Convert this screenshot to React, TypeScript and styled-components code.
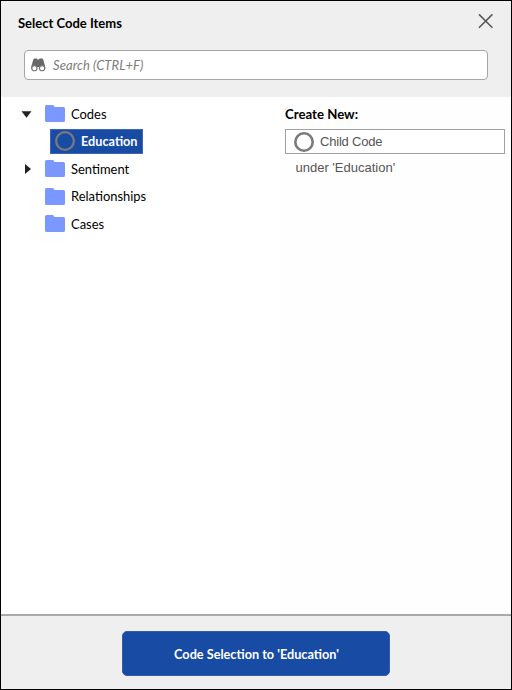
import React from 'react';
import styled, { createGlobalStyle } from 'styled-components';

const GlobalStyle = createGlobalStyle`
  * { box-sizing: border-box; }
  body { margin: 0; background: #fff; }
`;

const Dialog = styled.div`
  width: 512px;
  height: 690px;
  border: 1px solid #000;
  background: #fff;
  display: flex;
  flex-direction: column;
  font-family: Lato, 'Liberation Sans', sans-serif;
  font-size: 13px;
  color: #000;
  white-space: nowrap;
`;

const Header = styled.header`
  height: 96px;
  background: #efefef;
`;

const TitleRow = styled.div`
  height: 49px;
  padding: 11px 16px 0 17px;
  display: flex;
  justify-content: space-between;
  align-items: flex-start;
`;

const Title = styled.h1`
  margin: 0;
  font-size: 13px;
  line-height: 22px;
  font-weight: 700;
`;

const CloseButton = styled.button`
  border: 0;
  padding: 0;
  background: none;
  display: flex;
`;

const SearchBox = styled.label`
  margin: 0 23px;
  height: 30px;
  border: 1px solid #a6a6a6;
  border-radius: 4px;
  background: #fff;
  display: flex;
  align-items: center;
  padding-left: 6px;
  gap: 7px;
`;

const SearchHint = styled.span`
  font-style: italic;
  font-size: 13px;
  letter-spacing: 0.07px;
  color: #7d7d7d;
`;

const Body = styled.main`
  flex: 1;
  display: grid;
  grid-template-columns: 278px 1fr;
`;

const Tree = styled.ul`
  list-style: none;
  margin: 0;
  padding: 3px 0 0 18px;
`;

const TreeRow = styled.li`
  height: 27.5px;
  display: flex;
  align-items: center;
`;

const Expander = styled.span`
  width: 26px;
  display: flex;
`;

const TreeLabel = styled.span`
  margin-left: 6px;
  font-size: 12.95px;
`;

const SelectedItem = styled.div`
  margin-left: 31px;
  width: 93px;
  height: 25px;
  border: 1px solid #3b68b5;
  background: #184ba3;
  color: #fff;
  font-size: 12.7px;
  font-weight: 700;
  display: flex;
  align-items: center;
  padding-left: 4px;
  gap: 6px;
`;

const RingIcon = styled.svg`
  width: 20px;
  height: 20px;
  flex: none;
`;

const CreatePanel = styled.section`
  background: #fefefe;
  padding: 5px 6px 0;
`;

const CreateTitle = styled.h2`
  margin: 0;
  height: 27px;
  line-height: 24px;
  font-size: 13.2px;
  font-weight: 700;
`;

const ChildButton = styled.button`
  width: 220px;
  height: 25px;
  border: 1px solid #a0a0a0;
  background: #fff;
  color: #555;
  display: flex;
  align-items: center;
  padding: 0 0 0 8px;
  gap: 6px;
  font: 13px 'Liberation Sans', sans-serif;
  letter-spacing: -0.2px;
`;

const ParentNote = styled.div`
  padding: 6px 0 0 10.5px;
  font: 13px/15px 'Liberation Sans', sans-serif;
  color: #555;
`;

const Footer = styled.footer`
  height: 75px;
  border-top: 2px solid #a9a9a9;
  background: #efefef;
  display: flex;
  justify-content: center;
  padding-top: 15px;
`;

const SubmitButton = styled.button`
  width: 268px;
  height: 45px;
  border: 1px solid #2f5cab;
  border-radius: 5px;
  background: #184ba3;
  color: #fff;
  padding: 0 0 0 1px;
  font: 700 12.7px Lato, sans-serif;
`;

const Ring = ({ width }: { width: number }) => (
  <RingIcon viewBox="0 0 20 20">
    <circle cx="10" cy="10" r={10 - width / 2} fill="none" stroke="#7a7a7a" strokeWidth={width} />
  </RingIcon>
);

const Folder = () => (
  <svg width="20" height="17" viewBox="0 0 20 17">
    <path d="M1.5 0H7.5Q8.5 0 9 1L9.4 2H18.5Q20 2 20 3.5V15.5Q20 17 18.5 17H1.5Q0 17 0 15.5V1.5Q0 0 1.5 0Z" fill="#7a98ff" />
  </svg>
);

const Binoculars = () => (
  <svg width="15" height="14" viewBox="0 0 15 14">
    <path d="M2.4 1.3L3.2.4H6L6.5 1.6H8L8.5.4H11.3L12.1 1.3L14.2 8.5V11H8.4V9H6.1V11H.3V8.5Z" fill="#686868" />
    <circle cx="3.4" cy="10.2" r="2.6" fill="#fff" stroke="#757575" strokeWidth="1.1" />
    <circle cx="11.1" cy="10.2" r="2.6" fill="#fff" stroke="#757575" strokeWidth="1.1" />
  </svg>
);

const Triangle = ({ open }: { open?: boolean }) => (
  <svg width="18" height="12" viewBox="0 0 18 12">
    <path d={open ? 'M2.5 3.2H12.5L7.5 9.8Z' : 'M6 1V11L12 6Z'} fill="#222" />
  </svg>
);

const folders = [
  { name: 'Sentiment', expandable: true },
  { name: 'Relationships', expandable: false },
  { name: 'Cases', expandable: false },
];

export default function App() {
  return (
    <>
      <GlobalStyle />
      <Dialog>
        <Header>
          <TitleRow>
            <Title>Select Code Items</Title>
            <CloseButton aria-label="Close">
              <svg width="18" height="18" viewBox="0 0 18 18">
                <path d="M2 2.4L15.4 15.8M15.4 2.4L2 15.8" stroke="#555" strokeWidth="1.5" />
              </svg>
            </CloseButton>
          </TitleRow>
          <SearchBox>
            <Binoculars />
            <SearchHint>Search (CTRL+F)</SearchHint>
          </SearchBox>
        </Header>
        <Body>
          <Tree>
            <TreeRow>
              <Expander><Triangle open /></Expander>
              <Folder />
              <TreeLabel>Codes</TreeLabel>
            </TreeRow>
            <TreeRow>
              <SelectedItem>
                <Ring width={2.3} />
                <span>Education</span>
              </SelectedItem>
            </TreeRow>
            {folders.map(f => (
              <TreeRow key={f.name}>
                <Expander>{f.expandable && <Triangle />}</Expander>
                <Folder />
                <TreeLabel>{f.name}</TreeLabel>
              </TreeRow>
            ))}
          </Tree>
          <CreatePanel>
            <CreateTitle>Create New:</CreateTitle>
            <ChildButton>
              <Ring width={2.6} />
              Child Code
            </ChildButton>
            <ParentNote>under 'Education'</ParentNote>
          </CreatePanel>
        </Body>
        <Footer>
          <SubmitButton>Code Selection to 'Education'</SubmitButton>
        </Footer>
      </Dialog>
    </>
  );
}
